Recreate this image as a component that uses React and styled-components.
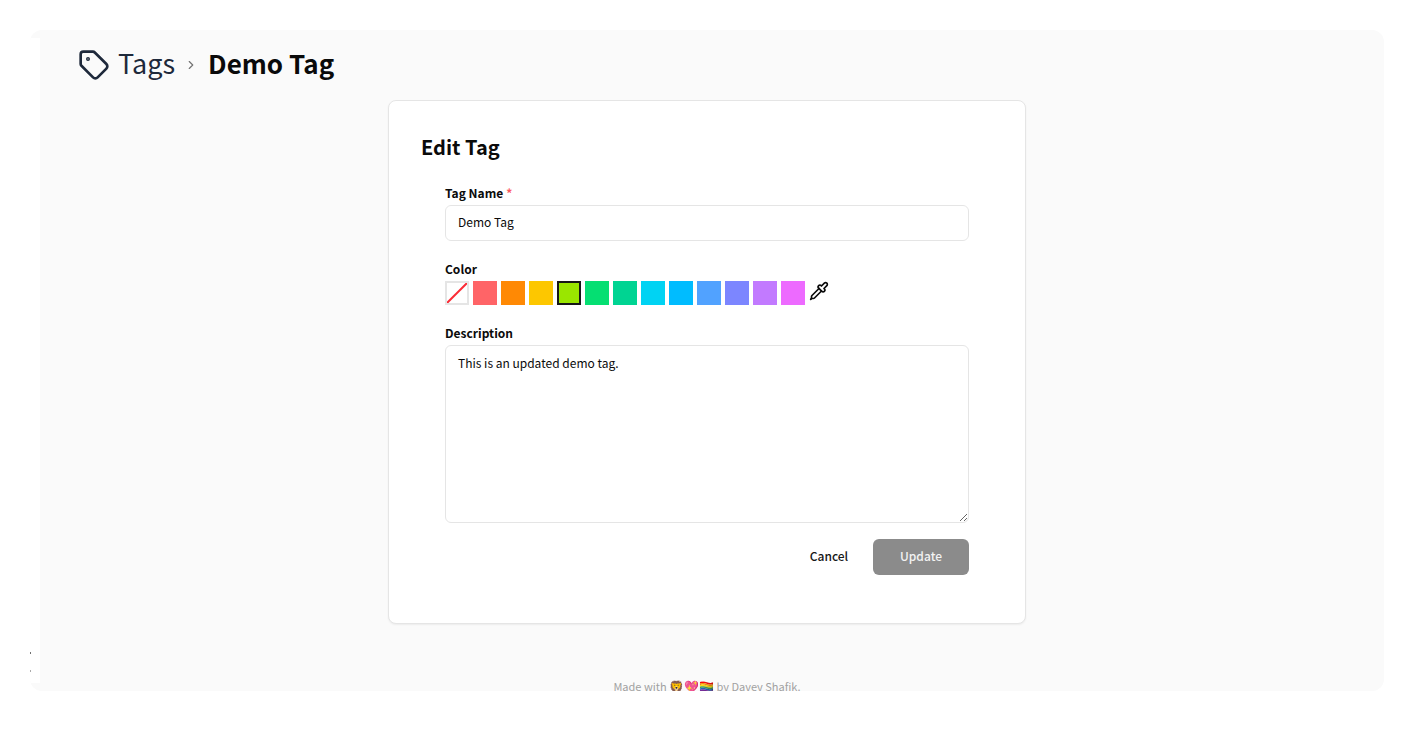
import React, { useState } from "react";
import styled, { createGlobalStyle } from "styled-components";

const GlobalStyle = createGlobalStyle`
  *, *::before, *::after { box-sizing: border-box; }
  body {
    margin: 0;
    background: #fff;
    color: #0a0a0a;
    font-family: "Noto Sans CJK SC", "Noto Sans", sans-serif;
    font-size: 12px;
    line-height: 20px;
  }
  button, input, textarea { font: inherit; color: inherit; }
  h1, h2, p { margin: 0; }
`;

const Page = styled.div`
  height: 100vh;
  padding: 30px 42px 42px 30px;
`;

const Shell = styled.div`
  display: flex;
  height: 100%;
  overflow: hidden;
  border-radius: 12px;
  background: #fafafa;
`;

const Rail = styled.aside`
  display: flex;
  flex-direction: column;
  justify-content: flex-end;
  align-items: flex-start;
  gap: 16px;
  flex: 0 0 10px;
  margin: 8px 0;
  padding-bottom: 11px;
  background: #fff;
`;

const RailMark = styled.span`
  width: 1px;
  height: 2px;
  background: ${({ $faint }) => ($faint ? "#aaa" : "#707070")};
`;

const Main = styled.main`
  display: flex;
  flex-direction: column;
  flex: 1;
  min-width: 0;
  padding: 16px 10px 0 0;
`;

const Breadcrumb = styled.nav`
  display: flex;
  flex: none;
  align-items: center;
  height: 34px;
  padding-left: 38px;
  font-size: 27px;
  line-height: 34px;
`;

const CrumbLink = styled.a`
  display: flex;
  align-items: center;
  gap: 8px;
  color: #1e293b;
  text-decoration: none;

  svg { margin-top: 4px; }
`;

const Chevron = styled.svg`
  width: 14px;
  height: 14px;
  margin: 4px 10px 0 9px;
`;

const CrumbTitle = styled.h1`
  font-size: 26px;
  line-height: 34px;
  font-weight: 600;
`;

const Card = styled.section`
  flex: none;
  width: 100%;
  max-width: 638px;
  margin: 20px auto 0;
  padding: 30px 32px 48px;
  border: 1px solid #e5e5e5;
  border-radius: 8px;
  background: #fff;
  box-shadow: 0 1px 2px rgba(0, 0, 0, 0.06);
`;

const CardTitle = styled.h2`
  font-size: 20px;
  line-height: 32px;
  font-weight: 600;
`;

const Form = styled.form`
  display: flex;
  flex-direction: column;
  padding: 20px 24px 0;
`;

const Field = styled.div`
  display: flex;
  flex-direction: column;
  margin-bottom: ${({ $gap }) => $gap}px;
`;

const Label = styled.label`
  display: flex;
  gap: 3px;
  height: 22px;
  font-weight: 600;
`;

const Required = styled.span`
  color: #fb5a5f;
`;

const TextInput = styled.input`
  width: 100%;
  height: 36px;
  padding: 0 12px 3px;
  border: 1px solid #e5e5e5;
  border-radius: 6px;
  background: #fff;
  outline: none;
`;

const TextArea = styled.textarea`
  display: block;
  width: 100%;
  height: 178px;
  padding: 7px 12px;
  border: 1px solid #e5e5e5;
  border-radius: 6px;
  background: #fff;
  outline: none;
  resize: vertical;
`;

const Swatches = styled.div`
  display: flex;
  gap: 4px;
`;

const Swatch = styled.button`
  display: block;
  width: 24px;
  height: 24px;
  padding: 0;
  border: ${({ $border }) => ($border ? `2px solid ${$border}` : "0")};
  background: ${({ $color }) => $color};
  cursor: pointer;

  svg { display: block; width: 20px; height: 20px; }
`;

const PickerButton = styled.button`
  width: 20px;
  height: 20px;
  padding: 0;
  border: 0;
  background: none;
  cursor: pointer;

  svg { display: block; }
`;

const Actions = styled.div`
  display: flex;
  justify-content: flex-end;
  gap: 8px;
`;

const Button = styled.button`
  min-width: ${({ $primary }) => ($primary ? 96 : 72)}px;
  height: 36px;
  padding: 0 16px 2px;
  border: 0;
  border-radius: 6px;
  background: ${({ $primary }) => ($primary ? "#8b8b8b" : "transparent")};
  color: ${({ $primary }) => ($primary ? "#f3f3f3" : "#171717")};
  font-size: 12px;
  font-weight: 500;
`;

const Footer = styled.footer`
  flex: none;
  margin-top: 52px;
  color: #a1a1a1;
  font-size: 11px;
  line-height: 20px;
  text-align: center;
`;

const Emoji = styled.span`
  font-size: 12px;
  line-height: 1;
`;

const colors = [
  "#ff6467", "#ff8904", "#fdc700", "#9ae600", "#05df72", "#00d492",
  "#00d3f3", "#00bcff", "#51a2ff", "#7c86ff", "#c27aff", "#ed6aff",
];

const TagIcon = () => (
  <svg width="32" height="32" viewBox="0 0 24 24" fill="none" stroke="currentColor" strokeWidth="2" strokeLinecap="round" strokeLinejoin="round" aria-hidden="true">
    <path d="M12.586 2.586A2 2 0 0 0 11.172 2H4a2 2 0 0 0-2 2v7.172a2 2 0 0 0 .586 1.414l8.704 8.704a2.426 2.426 0 0 0 3.42 0l6.58-6.58a2.426 2.426 0 0 0 0-3.42z" />
    <circle cx="7.5" cy="7.5" r=".5" fill="currentColor" />
  </svg>
);

const PipetteIcon = () => (
  <svg width="20" height="20" viewBox="0 0 24 24" fill="none" stroke="currentColor" strokeWidth="2" strokeLinecap="round" strokeLinejoin="round" aria-hidden="true">
    <path d="m12 9-8.414 8.414A2 2 0 0 0 3 18.828v1.344a2 2 0 0 1-.586 1.414A2 2 0 0 1 3.828 21h1.344a2 2 0 0 0 1.414-.586L15 12" />
    <path d="m18 9 .4.4a1 1 0 1 1-3 3l-3.8-3.8a1 1 0 1 1 3-3l.4.4 3.4-3.4a1 1 0 1 1 3 3z" />
    <path d="m2 22 .414-.414" />
  </svg>
);

export default function App() {
  const [name, setName] = useState("Demo Tag");
  const [color, setColor] = useState("#9ae600");
  const [description, setDescription] = useState("This is an updated demo tag.");

  return (
    <Page>
      <GlobalStyle />
      <Shell>
        <Rail>
          <RailMark />
          <RailMark $faint />
        </Rail>
        <Main>
          <Breadcrumb aria-label="Breadcrumb">
            <CrumbLink href="#tags"><TagIcon />Tags</CrumbLink>
            <Chevron viewBox="0 0 24 24" fill="none" stroke="#737373" strokeWidth="2" strokeLinecap="round" strokeLinejoin="round" aria-hidden="true">
              <path d="m9 18 6-6-6-6" />
            </Chevron>
            <CrumbTitle>Demo Tag</CrumbTitle>
          </Breadcrumb>
          <Card>
            <CardTitle>Edit Tag</CardTitle>
            <Form onSubmit={(e) => e.preventDefault()}>
              <Field $gap={18}>
                <Label htmlFor="name">Tag Name<Required>*</Required></Label>
                <TextInput id="name" value={name} onChange={(e) => setName(e.target.value)} />
              </Field>
              <Field $gap={18}>
                <Label as="span" id="color-label">Color</Label>
                <Swatches role="group" aria-labelledby="color-label">
                  <Swatch type="button" aria-label="No color" $color="#fff" $border={color ? "#e5e5e5" : "#171717"} onClick={() => setColor("")}>
                    <svg viewBox="0 0 20 20"><path d="M0 20 20 0" stroke="#fb2c36" strokeWidth="2" /></svg>
                  </Swatch>
                  {colors.map((c) => (
                    <Swatch key={c} type="button" aria-label={c} $color={c} $border={c === color ? "#171717" : null} onClick={() => setColor(c)} />
                  ))}
                  <PickerButton type="button" aria-label="Pick a color"><PipetteIcon /></PickerButton>
                </Swatches>
              </Field>
              <Field $gap={16}>
                <Label htmlFor="description">Description</Label>
                <TextArea id="description" value={description} onChange={(e) => setDescription(e.target.value)} />
              </Field>
              <Actions>
                <Button type="button">Cancel</Button>
                <Button type="submit" $primary>Update</Button>
              </Actions>
            </Form>
          </Card>
          <Footer>Made with <Emoji>🦁💖🏳️‍🌈</Emoji> by Davey Shafik.</Footer>
        </Main>
      </Shell>
    </Page>
  );
}
